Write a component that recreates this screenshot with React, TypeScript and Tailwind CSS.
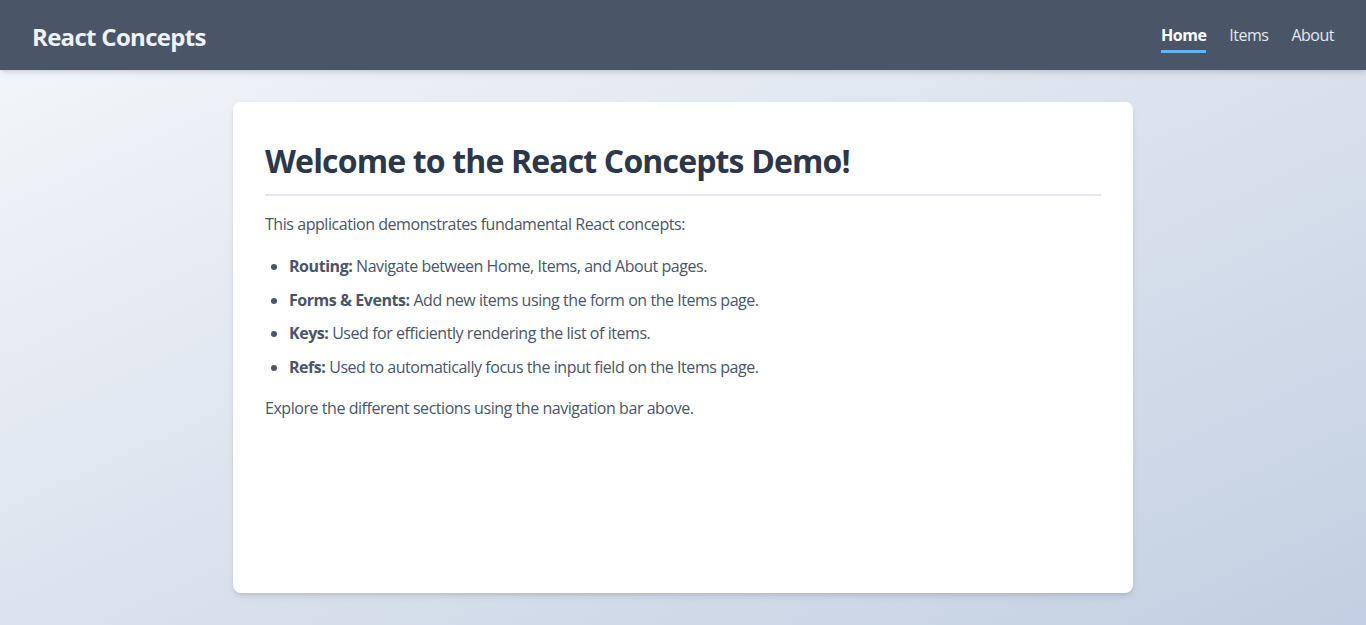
import React from 'react'

const font = { fontFamily: '"Segoe UI", "Open Sans", "Noto Sans", sans-serif' }

function NavLink({ label, active }: { label: string; active?: boolean }) {
    return (
        <a
            href="#"
            className={`text-base tracking-[-0.5px] pb-[3px] border-b-[3px] ${active
                ? 'font-bold text-white border-[#63b3ed]'
                : 'text-[#e2e8f0] border-transparent'
                }`}
        >
            {label}
        </a>
    )
}

export default function App() {
    return (
        <div
            className="min-h-screen flex flex-col bg-gradient-to-br from-[#f5f7fa] to-[#c3cfe2]"
            style={font}
        >
            {/* Header */}
            <header className="h-[70px] bg-[#4a5568] px-8 flex items-center justify-between shadow-md">
                <h2 className="text-2xl font-bold text-[#edf2f7] tracking-[-0.7px] mt-[3px]">React Concepts</h2>
                <nav className="flex items-center gap-[23px] pt-[5px]">
                    <NavLink label="Home" active />
                    <NavLink label="Items" />
                    <NavLink label="About" />
                </nav>
            </header>

            {/* Content */}
            <main className="flex-1 flex justify-center py-8">
                <div className="w-[900px] bg-white rounded-lg shadow-md p-8 text-[#4a5568] leading-[1.6] tracking-[-0.45px]">
                    <h1 className="text-[32px] leading-[1.7] font-bold text-[#2d3748] tracking-[-0.85px] pb-[6px] border-b-2 border-[#e2e8f0] mb-4">
                        Welcome to the React Concepts Demo!
                    </h1>
                    <p className="mb-4">This application demonstrates fundamental React concepts:</p>
                    <ul className="list-disc pl-6 mb-4">
                        <li className="mb-2"><strong>Routing:</strong> Navigate between Home, Items, and About pages.</li>
                        <li className="mb-2"><strong>Forms &amp; Events:</strong> Add new items using the form on the Items page.</li>
                        <li className="mb-2"><strong>Keys:</strong> Used for efficiently rendering the list of items.</li>
                        <li><strong>Refs:</strong> Used to automatically focus the input field on the Items page.</li>
                    </ul>
                    <p>Explore the different sections using the navigation bar above.</p>
                </div>
            </main>
        </div>
    )
}
